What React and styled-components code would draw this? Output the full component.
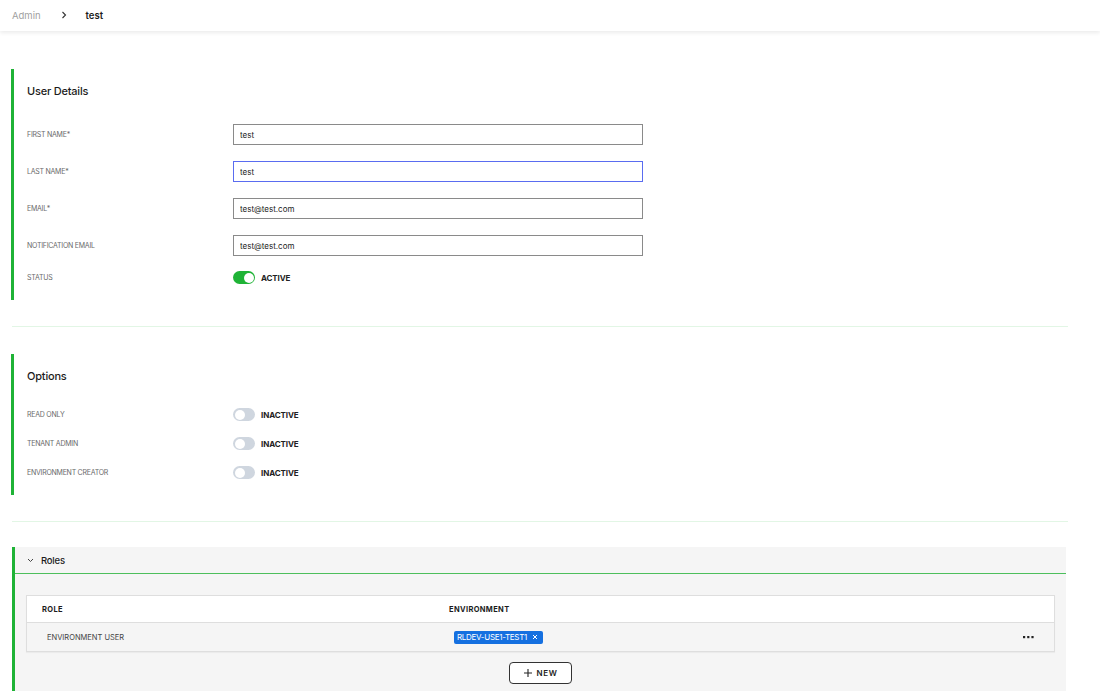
import React from 'react'
import styled, { createGlobalStyle } from 'styled-components'

const GlobalStyle = createGlobalStyle`
    body {
        margin: 0;
        background: #fff;
        font-family: Inter, "Liberation Sans", sans-serif;
        color: #222;
    }
`

const Header = styled.header`
    height: 32px;
    display: flex;
    align-items: center;
    padding: 0 12px;
    background: #fff;
    box-shadow: 0 2px 4px rgba(0, 0, 0, 0.08);
    font-size: 9.5px;
    margin-top: -1px;
`

const Crumb = styled.span`
    color: ${p => (p.$current ? '#1c1c1c' : '#a0a0a0')};
    font-weight: ${p => (p.$current ? 600 : 400)};
`

const CrumbSep = styled.span`
    display: flex;
    align-items: center;
    margin: 0 19px 0 20px;
    color: #333;
`

const Main = styled.main`
    padding: 38px 32px 0 11px;
`

const Section = styled.section`
    border-left: 3px solid #1fb336;
    padding: 15px 0 16px 13px;
`

const SectionTitle = styled.h2`
    margin: 0;
    font-size: 11px;
    line-height: 14px;
    font-weight: 500;
    color: #1c1c1c;
    letter-spacing: -0.2px;
`

const Rows = styled.div`
    display: flex;
    flex-direction: column;
    gap: ${p => p.$gap}px;
    margin-top: ${p => p.$top}px;
`

const FieldRow = styled.div`
    display: grid;
    grid-template-columns: 206px 410px;
    align-items: center;
    height: ${p => p.$h}px;
    margin-top: ${p => p.$mt || 0}px;
`

const Label = styled.label`
    font-size: 7px;
    text-transform: uppercase;
    color: #6a6a6a;
    letter-spacing: -0.25px;
`

const Input = styled.input`
    box-sizing: border-box;
    width: 410px;
    height: 21px;
    padding: 0 6px;
    border: 1px solid ${p => (p.$focused ? '#5a6cf0' : '#8a8a8a')};
    font-family: Inter, "Liberation Sans", sans-serif;
    font-size: 8px;
    color: #222;
    outline: none;
    background: #fff;
`

const ToggleWrap = styled.div`
    display: flex;
    align-items: center;
    gap: 6px;
`

const Track = styled.span`
    position: relative;
    display: inline-block;
    width: 22px;
    height: 13px;
    border-radius: 7px;
    background: ${p => (p.$on ? '#1fb336' : '#cfd6df')};
`

const Knob = styled.span`
    position: absolute;
    top: 1.5px;
    left: ${p => (p.$on ? '11px' : '1.5px')};
    width: 10px;
    height: 10px;
    border-radius: 50%;
    background: #fff;
`

const ToggleText = styled.span`
    font-size: 8px;
    font-weight: 700;
    color: #222;
    letter-spacing: -0.1px;
`

const Divider = styled.hr`
    border: none;
    border-top: 1px solid #e2f6e5;
    margin: 26px 0 ${p => p.$after}px 1px;
`

const Roles = styled.section`
    background: #f5f5f5;
    border-left: 3px solid #1fb336;
    margin-left: 1px;
    margin-right: 2px;
    padding-bottom: 8px;
`

const RolesHeader = styled.div`
    display: flex;
    align-items: center;
    gap: 7px;
    height: 26px;
    padding-left: 12px;
    border-bottom: 1px solid #4cbf5c;
    font-size: 9.5px;
    font-weight: 500;
    color: #1c1c1c;
    letter-spacing: -0.2px;
`

const Table = styled.div`
    margin: 21px 11px 0 11px;
    border: 1px solid #dedede;
    box-shadow: 0 1px 1px rgba(0, 0, 0, 0.04);
`

const TableRow = styled.div`
    display: grid;
    grid-template-columns: 407px 1fr 60px;
    align-items: center;
    height: ${p => (p.$head ? 26 : 28)}px;
    background: ${p => (p.$head ? '#fff' : '#f5f5f5')};
    border-top: ${p => (p.$head ? 'none' : '1px solid #dedede')};
`

const HeadCell = styled.div`
    padding-left: 15px;
    font-size: 7.5px;
    font-weight: 700;
    letter-spacing: 0.35px;
    color: #1c1c1c;
`

const Cell = styled.div`
    padding-left: 20px;
    font-size: 7.5px;
    color: #444;
    display: flex;
    align-items: center;
    justify-content: ${p => (p.$end ? 'flex-end' : 'flex-start')};
    padding-right: ${p => (p.$end ? '20px' : '0')};
`

const Chip = styled.span`
    display: inline-flex;
    align-items: center;
    gap: 5px;
    height: 13px;
    padding: 0 5px 0 3px;
    border-radius: 2px;
    background: #1570e0;
    color: #fff;
    font-size: 8px;
    letter-spacing: -0.3px;
`

const Footer = styled.div`
    display: flex;
    justify-content: center;
    padding-top: 10px;
`

const NewButton = styled.button`
    display: flex;
    align-items: center;
    justify-content: center;
    gap: 5px;
    width: 63px;
    height: 22px;
    border: 1px solid #333;
    border-radius: 4px;
    background: #fff;
    font-family: Inter, "Liberation Sans", sans-serif;
    font-size: 8px;
    font-weight: 600;
    letter-spacing: 0.6px;
    color: #222;
`

const Toggle = ({ on }) => (
    <ToggleWrap>
        <Track $on={on}><Knob $on={on} /></Track>
        <ToggleText>{on ? 'ACTIVE' : 'INACTIVE'}</ToggleText>
    </ToggleWrap>
)

const fields = [
    { label: 'First Name*', value: 'test' },
    { label: 'Last Name*', value: 'test', focused: true },
    { label: 'Email*', value: 'test@test.com' },
    { label: 'Notification Email', value: 'test@test.com' },
]

const options = ['Read Only', 'Tenant Admin', 'Environment Creator']

export default function App() {
    return (
        <>
            <GlobalStyle />
            <Header>
                <Crumb>Admin</Crumb>
                <CrumbSep>
                    <svg width="6" height="8" viewBox="0 0 6 8" fill="none">
                        <path d="M1.5 1l3 3-3 3" stroke="#333" strokeWidth="1.1" />
                    </svg>
                </CrumbSep>
                <Crumb $current>test</Crumb>
            </Header>
            <Main>
                <Section>
                    <SectionTitle>User Details</SectionTitle>
                    <Rows $gap={16} $top={26}>
                        {fields.map(f => (
                            <FieldRow key={f.label} $h={21}>
                                <Label>{f.label}</Label>
                                <Input defaultValue={f.value} $focused={f.focused} />
                            </FieldRow>
                        ))}
                        <FieldRow $h={13} $mt={-1}>
                            <Label>Status</Label>
                            <Toggle on />
                        </FieldRow>
                    </Rows>
                </Section>

                <Divider $after={27} />

                <Section>
                    <SectionTitle>Options</SectionTitle>
                    <Rows $gap={16} $top={25}>
                        {options.map(o => (
                            <FieldRow key={o} $h={13}>
                                <Label>{o}</Label>
                                <Toggle />
                            </FieldRow>
                        ))}
                    </Rows>
                </Section>

                <Divider $after={25} />

                <Roles>
                    <RolesHeader>
                        <svg width="7" height="5" viewBox="0 0 7 5" fill="none">
                            <path d="M1 1l2.5 2.5L6 1" stroke="#444" strokeWidth="1" />
                        </svg>
                        <span>Roles</span>
                    </RolesHeader>
                    <Table>
                        <TableRow $head>
                            <HeadCell>ROLE</HeadCell>
                            <HeadCell>ENVIRONMENT</HeadCell>
                            <HeadCell />
                        </TableRow>
                        <TableRow>
                            <Cell>ENVIRONMENT USER</Cell>
                            <Cell>
                                <Chip>
                                    RLDEV-USE1-TEST1
                                    <svg width="6" height="6" viewBox="0 0 6 6">
                                        <path d="M1 1l4 4M5 1L1 5" stroke="#fff" strokeWidth="1" />
                                    </svg>
                                </Chip>
                            </Cell>
                            <Cell $end>
                                <svg width="11" height="3" viewBox="0 0 11 3">
                                    <rect x="0" y="0" width="2.2" height="2.2" fill="#222" />
                                    <rect x="4.2" y="0" width="2.2" height="2.2" fill="#222" />
                                    <rect x="8.4" y="0" width="2.2" height="2.2" fill="#222" />
                                </svg>
                            </Cell>
                        </TableRow>
                    </Table>
                    <Footer>
                        <NewButton>
                            <svg width="8" height="8" viewBox="0 0 8 8">
                                <path d="M4 0v8M0 4h8" stroke="#222" strokeWidth="1.1" />
                            </svg>
                            NEW
                        </NewButton>
                    </Footer>
                </Roles>
            </Main>
        </>
    )
}
